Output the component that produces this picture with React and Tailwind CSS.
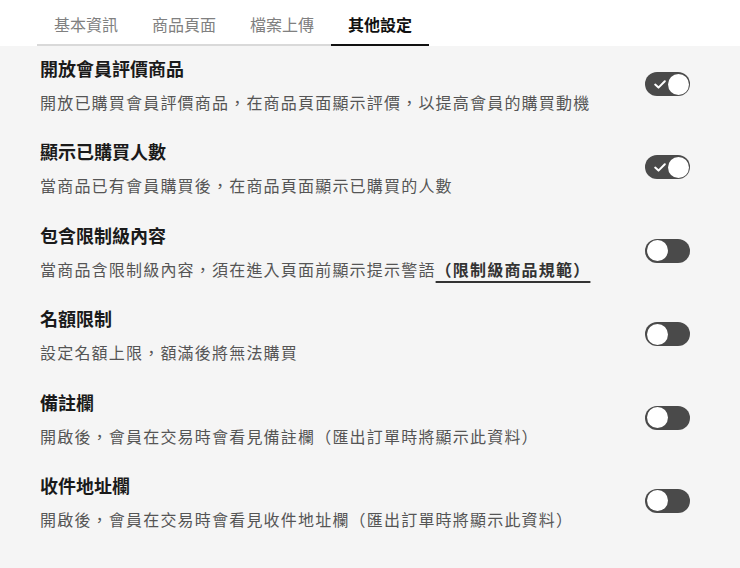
import React from 'react';

const tabs = ['基本資訊', '商品頁面', '檔案上傳', '其他設定'];

const settings = [
  { title: '開放會員評價商品', desc: '開放已購買會員評價商品，在商品頁面顯示評價，以提高會員的購買動機', on: true },
  { title: '顯示已購買人數', desc: '當商品已有會員購買後，在商品頁面顯示已購買的人數', on: true },
  { title: '包含限制級內容', desc: '當商品含限制級內容，須在進入頁面前顯示提示警語', link: '（限制級商品規範）', on: false },
  { title: '名額限制', desc: '設定名額上限，額滿後將無法購買', on: false },
  { title: '備註欄', desc: '開啟後，會員在交易時會看見備註欄（匯出訂單時將顯示此資料）', on: false },
  { title: '收件地址欄', desc: '開啟後，會員在交易時會看見收件地址欄（匯出訂單時將顯示此資料）', on: false },
];

function Toggle({ on }) {
  return (
    <div className={`relative w-[45px] h-[24px] rounded-full bg-[#4a4a4a] shrink-0 flex items-center ${on ? 'justify-end' : 'justify-start'} px-[1.5px]`}>
      {on && (
        <svg className="absolute left-[9px] top-[8px]" width="12" height="9" viewBox="0 0 12 9" fill="none">
          <path d="M1.2 4.6 L4.5 7.6 L10.8 1.2" stroke="white" strokeWidth="2" strokeLinecap="round" strokeLinejoin="round" />
        </svg>
      )}
      <div className="w-[21px] h-[21px] rounded-full bg-white"></div>
    </div>
  );
}

export default function App() {
  return (
    <div className="w-[740px] h-[568px] bg-[#f5f5f5] overflow-hidden" style={{ fontFamily: '"Noto Sans CJK TC", "Noto Sans", sans-serif' }}>
      {/* 分頁 */}
      <div className="bg-white pl-[37px]">
        <div className="inline-flex border-b-2 border-[#d9d9d9]">
          {tabs.map((t, i) => (
            <div
              key={t}
              className={`px-[17px] pt-3 pb-[8px] -mb-[2px] border-b-2 text-[16px] leading-6 ${i === 3 ? 'border-[#111] text-[#111] font-bold' : 'border-transparent text-[#808080]'}`}
            >
              {t}
            </div>
          ))}
        </div>
      </div>

      {/* 設定列表 */}
      <div className="pl-10 pr-[50px] pt-[9px] flex flex-col gap-[24.4px]">
        {settings.map(s => (
          <div key={s.title} className="flex items-center justify-between">
            <div className="flex flex-col gap-[9px]">
              <div className="text-[18px] leading-[26px] font-bold text-[#1a1a1a]">{s.title}</div>
              <div className="text-[16px] leading-6 tracking-[1.2px] text-[#555]">
                {s.desc}
                {s.link && (
                  <span className="font-bold text-[#333] underline decoration-[1.5px] underline-offset-[5px]">{s.link}</span>
                )}
              </div>
            </div>
            <div className="-mt-[1px]">
              <Toggle on={s.on} />
            </div>
          </div>
        ))}
      </div>
    </div>
  );
}
